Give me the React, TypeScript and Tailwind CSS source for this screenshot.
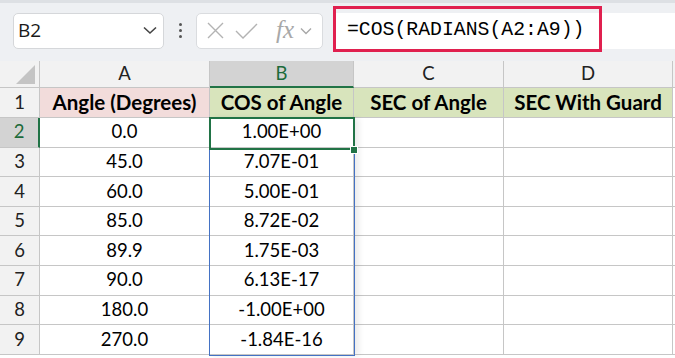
import React from "react";

const cols = [
  { key: "A", w: "w-[170px]" },
  { key: "B", w: "w-[144px]" },
  { key: "C", w: "w-[150px]" },
  { key: "D", w: "w-[169px]" },
];

const rows = [
  ["0.0", "1.00E+00"],
  ["45.0", "7.07E-01"],
  ["60.0", "5.00E-01"],
  ["85.0", "8.72E-02"],
  ["89.9", "1.75E-03"],
  ["90.0", "6.13E-17"],
  ["180.0", "-1.00E+00"],
  ["270.0", "-1.84E-16"],
];

const cellFont = { fontFamily: "Lato, 'Open Sans', sans-serif" };

function Toolbar() {
  return (
    <div className="h-[61px] bg-[#eef0f3] border-t-[3px] border-[#dde0e4] flex items-center pl-[13px] pb-[3px]">
      {/* name box */}
      <div className="w-[151px] h-[36px] bg-white rounded-[5px] border border-[#d5d7da] flex items-center justify-between pl-[4px] pr-[6px]">
        <span className="text-[19px] text-[#1a1a1a]" style={{ fontFamily: "'Open Sans', sans-serif" }}>
          B2
        </span>
        <svg width="14" height="9" viewBox="0 0 14 9">
          <path d="M1 1.5 L7 7 L13 1.5" fill="none" stroke="#444" strokeWidth="1.6" />
        </svg>
      </div>
      {/* ellipsis */}
      <div className="w-[32px] flex flex-col items-center gap-[3px]">
        <span className="w-[3px] h-[3px] rounded-full bg-[#555]" />
        <span className="w-[3px] h-[3px] rounded-full bg-[#555]" />
        <span className="w-[3px] h-[3px] rounded-full bg-[#555]" />
      </div>
      {/* formula buttons */}
      <div className="w-[127px] h-[36px] bg-white rounded-[5px] border border-[#dadcdf] flex items-center pl-[10px] gap-[11px]">
        <svg width="17" height="17" viewBox="0 0 17 17">
          <path d="M1 1 L16 16 M16 1 L1 16" stroke="#b3b3b3" strokeWidth="1.4" />
        </svg>
        <svg width="23" height="16" viewBox="0 0 23 16">
          <path d="M1 8 L8 15 L22 1" fill="none" stroke="#b3b3b3" strokeWidth="1.4" />
        </svg>
        <div className="ml-[7px] flex items-center gap-[6px]">
          <span
            className="italic text-[25px] leading-none text-[#a8a8a8] pb-[3px]"
            style={{ fontFamily: "'Liberation Serif', serif" }}
          >
            fx
          </span>
          <svg width="12" height="8" viewBox="0 0 12 8">
            <path d="M1 1.5 L6 6.5 L11 1.5" fill="none" stroke="#a8a8a8" strokeWidth="1.4" />
          </svg>
        </div>
      </div>
      {/* formula bar */}
      <div className="ml-[10px] flex-1 h-[36px] bg-white rounded-l-[4px] flex items-center relative">
        <div className="absolute left-0 top-[-7px] w-[269px] h-[46px] border-[3px] border-[#e0204f]" />
        <span
          className="pl-[14px] text-[19.8px] text-black"
          style={{ fontFamily: "'Liberation Mono', monospace" }}
        >
          =COS(RADIANS(A2:A9))
        </span>
      </div>
    </div>
  );
}

function Grid() {
  return (
    <div className="relative bg-white" style={cellFont}>
      {/* column headers */}
      <div className="flex h-[27px] bg-[#f2f2f2]">
        <div className="w-[40px] border-r border-b border-[#c6c6c6] relative overflow-hidden">
          <svg className="absolute right-[4px] bottom-[3px]" width="19" height="19" viewBox="0 0 19 19">
            <path d="M19 0 L19 19 L0 19 Z" fill="#c4c4c4" />
          </svg>
        </div>
        {cols.map((c) => (
          <div
            key={c.key}
            className={`${c.w} flex items-center justify-center text-[18.5px] border-r ${
              c.key === "B"
                ? "bg-[#d3d3d3] text-[#1d6b3b] border-b-2 border-b-[#217346] border-r-[#c6c6c6]"
                : "text-[#222] border-b border-[#c6c6c6]"
            }`}
          >
            {c.key}
          </div>
        ))}
        <div className="flex-1 border-b border-[#c6c6c6]" />
      </div>
      {/* row 1 */}
      <div className="flex h-[30px]">
        <div className="w-[40px] bg-[#f2f2f2] border-r border-b border-[#c6c6c6] flex items-center justify-center text-[18.5px] text-[#222]">
          1
        </div>
        <div className="w-[170px] bg-[#f2dcdb] border-r border-b border-[#c6c6c6] flex items-center justify-center font-bold text-[20.5px] text-black">
          Angle (Degrees)
        </div>
        <div className="w-[144px] bg-[#d8e4bc] border-r border-b border-[#c6c6c6] flex items-center justify-center font-bold text-[20.5px] text-black">
          COS of Angle
        </div>
        <div className="w-[150px] bg-[#d8e4bc] border-r border-b border-[#c6c6c6] flex items-center justify-center font-bold text-[20.5px] text-black">
          SEC of Angle
        </div>
        <div className="w-[169px] bg-[#d8e4bc] border-r border-b border-[#c6c6c6] flex items-center justify-center font-bold text-[20.5px] text-black">
          SEC With Guard
        </div>
        <div className="flex-1 border-b border-[#c6c6c6]" />
      </div>
      {rows.map((r, i) => (
        <div key={i} className="flex h-[29.6px]">
          <div
            className={`w-[40px] border-b border-[#c6c6c6] flex items-center justify-center text-[18.5px] ${
              i === 0
                ? "bg-[#d3d3d3] text-[#1d6b3b] border-r-2 border-r-[#217346]"
                : "bg-[#f2f2f2] text-[#222] border-r"
            }`}
          >
            {i + 2}
          </div>
          <div className="w-[170px] border-r border-b border-[#c6c6c6] flex items-center justify-center text-[18.5px] text-black">
            {r[0]}
          </div>
          <div className="w-[144px] border-r border-b border-[#c6c6c6] flex items-center justify-center text-[18.5px] text-black">
            {r[1]}
          </div>
          <div className="w-[150px] border-r border-b border-[#c6c6c6]" />
          <div className="w-[169px] border-r border-b border-[#c6c6c6]" />
          <div className="flex-1 border-b border-[#c6c6c6]" />
        </div>
      ))}
      {/* formula reference range */}
      <div className="absolute left-[209px] top-[57px] w-[146px] h-[238px] border-[1.5px] border-[#4472c4] shadow-[4px_0_6px_rgba(0,0,0,0.08)] pointer-events-none" />
      {/* active cell */}
      <div className="absolute left-[209px] top-[56px] w-[146px] h-[33px] border-2 border-[#217346] pointer-events-none" />
      {/* fill handle */}
      <div className="absolute left-[350px] top-[85px] w-[8px] h-[8px] bg-[#217346] border border-white pointer-events-none" />
    </div>
  );
}

export default function App() {
  return (
    <div className="w-[675px] h-[358px] overflow-hidden bg-white">
      <Toolbar />
      <Grid />
    </div>
  );
}
